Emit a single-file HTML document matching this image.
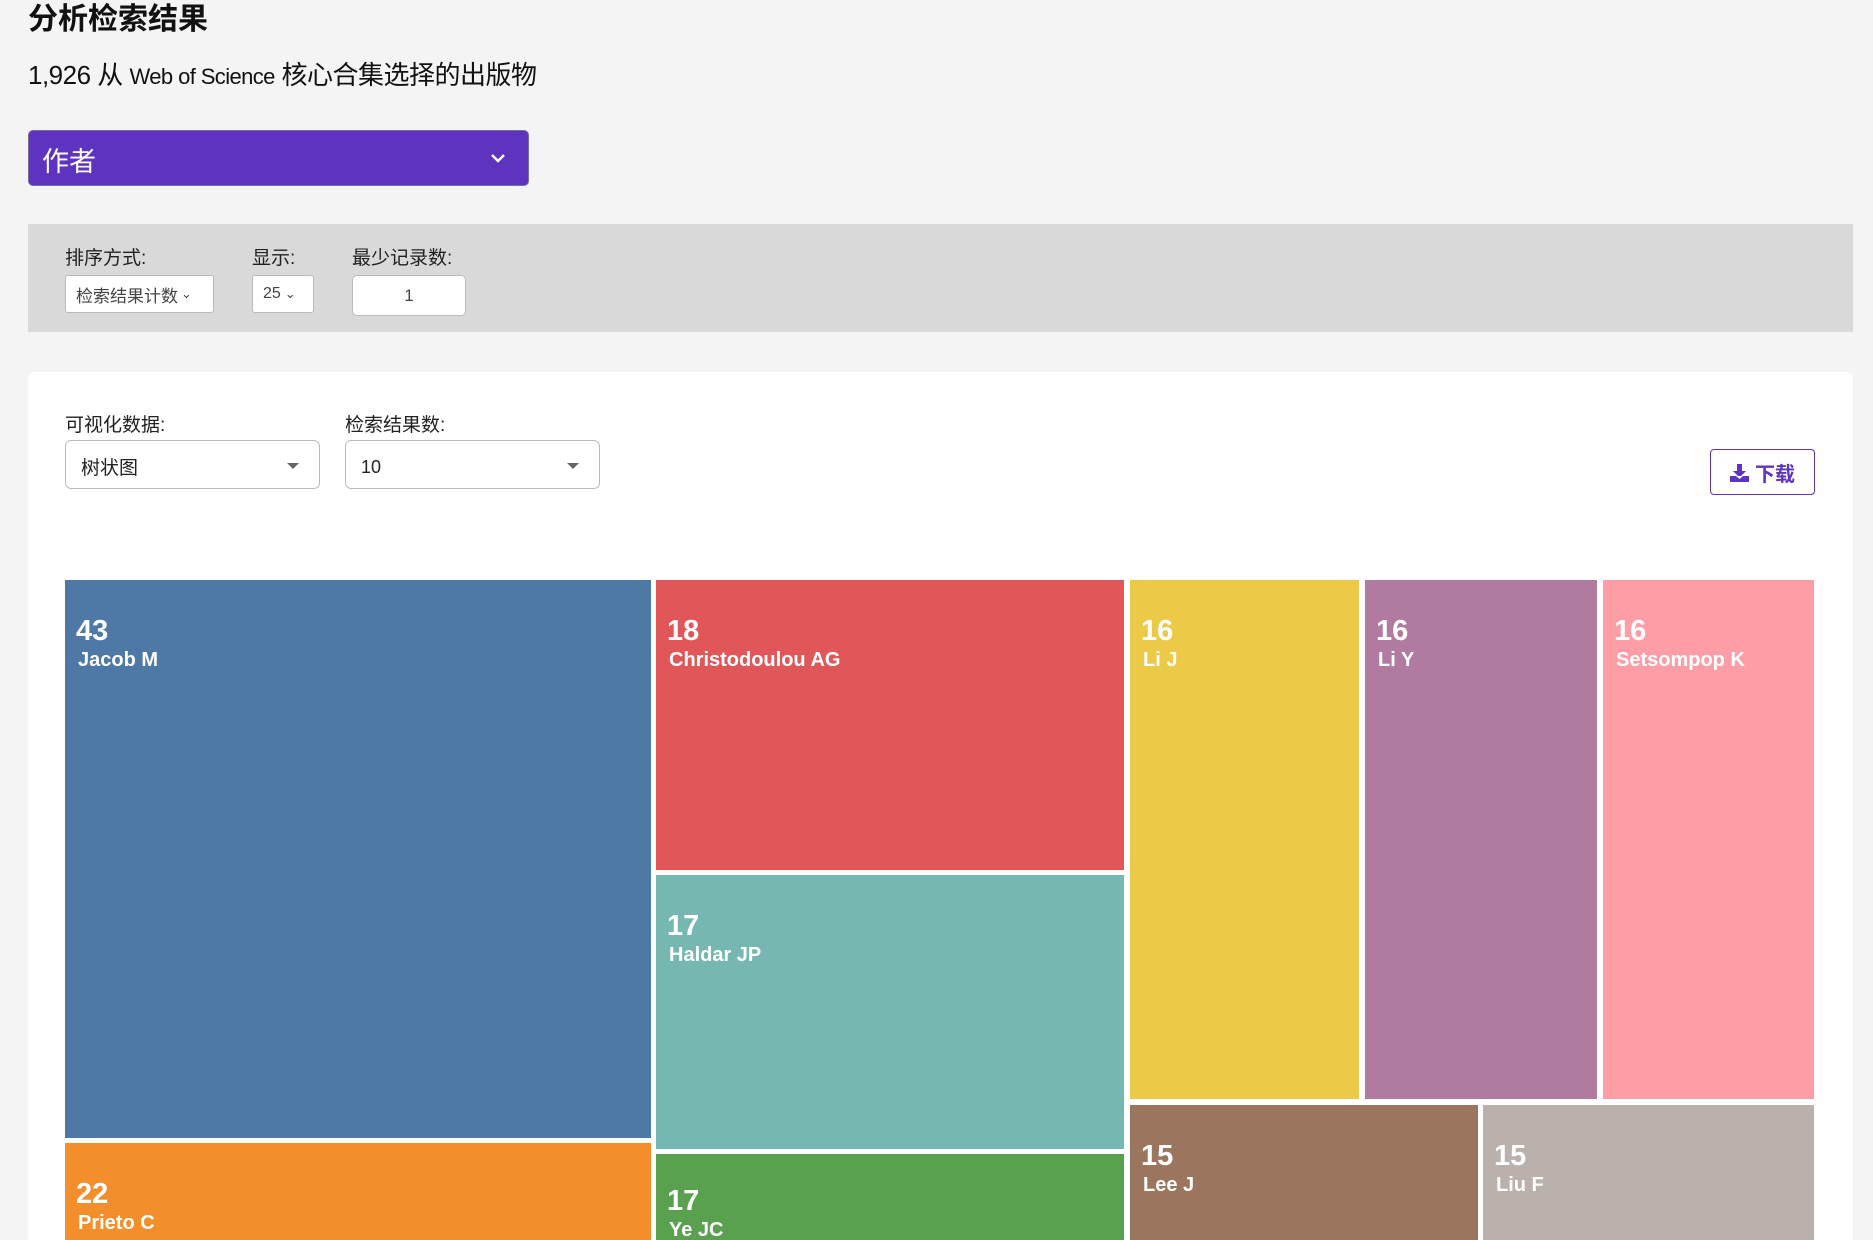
<!DOCTYPE html>
<html style="width:1873px;height:1240px;overflow:hidden"><head><meta charset="utf-8"><style>
*{box-sizing:border-box;margin:0;padding:0}
body{width:1873px;height:1240px;overflow:hidden;background:#f4f4f4;font-family:"Liberation Sans","Noto Sans CJK SC",sans-serif;color:#111;position:relative}
.a{position:absolute}
.lbl{font-size:19px;color:#222}
.sel{background:#fff;border:1px solid #bbb;border-radius:3px;font-size:17px;color:#444;display:flex;align-items:center}
.cell{position:absolute;color:#fff;font-weight:bold;padding:34px 0 0 11px}
.cell .n{font-size:29px;line-height:34px}
.cell .m{font-size:20px;line-height:24px;padding-left:2px}
.tri{width:0;height:0;border-left:6px solid transparent;border-right:6px solid transparent;border-top:6px solid #666;position:absolute}
</style></head><body>
<div class="a" style="left:28px;top:0;font-size:30px;font-weight:bold;line-height:40px">分析检索结果</div>
<div class="a" style="left:28px;top:57px;font-size:26px;line-height:36px;letter-spacing:-0.5px">1,926 从 <span style="font-size:22px;letter-spacing:-0.6px">Web of Science</span> 核心合集选择的出版物</div>
<div class="a" style="left:28px;top:130px;width:501px;height:56px;background:#5e33bf;border-radius:5px;border:1px solid #7a6aa8;color:#fff;font-size:27px;padding:9px 0 0 13px">作者
<svg class="a" style="left:461px;top:22px" width="16" height="12" viewBox="0 0 16 12"><path d="M2 2l6 6 6-6" stroke="#fff" stroke-width="2.5" fill="none"/></svg></div>
<div class="a" style="left:28px;top:224px;width:1825px;height:108px;background:#d9d9d9"></div>
<div class="a lbl" style="left:65px;top:243px">排序方式:</div>
<div class="a lbl" style="left:252px;top:243px">显示:</div>
<div class="a lbl" style="left:352px;top:243px">最少记录数:</div>
<div class="a sel" style="left:65px;top:275px;width:149px;height:38px;padding-left:10px">检索结果计数 <span style="font-size:13px;margin-left:3px">⌄</span></div>
<div class="a sel" style="left:252px;top:275px;width:62px;height:38px;padding-left:10px;font-size:16px">25 <span style="font-size:13px;margin-left:4px">⌄</span></div>
<div class="a sel" style="left:352px;top:275px;width:114px;height:41px;border-radius:5px;justify-content:center;font-size:17px">1</div>
<div class="a" style="left:28px;top:372px;width:1825px;height:868px;background:#fff;border-radius:6px 6px 0 0"></div>
<div class="a lbl" style="left:65px;top:410px">可视化数据:</div>
<div class="a lbl" style="left:345px;top:410px">检索结果数:</div>
<div class="a sel" style="left:65px;top:440px;width:255px;height:49px;border-radius:6px;padding:3px 0 0 15px;color:#222;font-size:19px">树状图<div class="tri" style="left:221px;top:22px"></div></div>
<div class="a sel" style="left:345px;top:440px;width:255px;height:49px;border-radius:6px;padding:5px 0 0 15px;color:#222;font-size:18px">10<div class="tri" style="left:221px;top:22px"></div></div>
<div class="a" style="left:1710px;top:449px;width:105px;height:46px;border:1.5px solid #5e33bf;border-radius:4px;color:#5e33bf;font-weight:bold;font-size:20px;display:flex;align-items:center;justify-content:center;gap:6px">
<svg width="19" height="19" viewBox="0 0 19 19"><path d="M7 1h5v7h4l-6.5 6.5L3 8h4z" fill="#5e33bf"/><rect x="0" y="13" width="19" height="6" fill="#5e33bf"/><path d="M6 13l3.5 3 3.5-3" fill="#fff"/></svg>下载</div>
<div class="cell" style="left:65px;top:580px;width:586px;height:558px;background:#4e79a7"><div class="n">43</div><div class="m">Jacob M</div></div>
<div class="cell" style="left:65px;top:1143px;width:586px;height:97px;background:#f28e2b"><div class="n">22</div><div class="m">Prieto C</div></div>
<div class="cell" style="left:656px;top:580px;width:468px;height:290px;background:#e15759"><div class="n">18</div><div class="m">Christodoulou AG</div></div>
<div class="cell" style="left:656px;top:875px;width:468px;height:274px;background:#76b7b2"><div class="n">17</div><div class="m">Haldar JP</div></div>
<div class="cell" style="left:656px;top:1154px;width:468px;height:86px;background:#59a14f;padding-top:30px"><div class="n">17</div><div class="m">Ye JC</div></div>
<div class="cell" style="left:1130px;top:580px;width:229px;height:519px;background:#edc948"><div class="n">16</div><div class="m">Li J</div></div>
<div class="cell" style="left:1365px;top:580px;width:232px;height:519px;background:#b07aa1"><div class="n">16</div><div class="m">Li Y</div></div>
<div class="cell" style="left:1603px;top:580px;width:211px;height:519px;background:#ff9da7"><div class="n">16</div><div class="m">Setsompop K</div></div>
<div class="cell" style="left:1130px;top:1105px;width:348px;height:135px;background:#9c755f"><div class="n">15</div><div class="m">Lee J</div></div>
<div class="cell" style="left:1483px;top:1105px;width:331px;height:135px;background:#bab0ac"><div class="n">15</div><div class="m">Liu F</div></div>
</body></html>
